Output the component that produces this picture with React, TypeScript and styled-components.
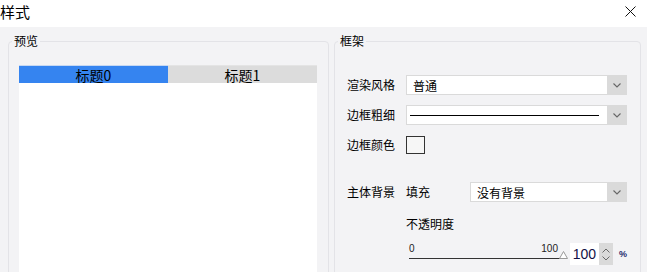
import React from "react";
import styled, { createGlobalStyle } from "styled-components";

const GlobalStyle = createGlobalStyle`
  html, body {
    margin: 0;
    padding: 0;
    background: #ffffff;
  }
  body {
    font-family: "Noto Sans CJK SC", "Noto Sans", sans-serif;
    font-size: 12px;
    color: #000;
  }
`;

const Window = styled.div`
  width: 647px;
  height: 272px;
  overflow: hidden;
  display: flex;
  flex-direction: column;
`;

const TitleBar = styled.div`
  height: 27px;
  flex: none;
  display: flex;
  align-items: center;
  justify-content: space-between;
  background: #fff;
`;

const Title = styled.div`
  font-size: 15px;
  line-height: 18px;
  margin-top: -3px;
`;

const CloseButton = styled.div`
  width: 11px;
  height: 11px;
  margin-right: 11px;
  margin-top: -5px;
  display: flex;
`;

const Body = styled.div`
  flex: 1;
  display: flex;
  gap: 5px;
  padding: 7px 6px 0 8px;
  background: #f3f3f5;
`;

const Group = styled.fieldset<{ $width: number }>`
  width: ${(p) => p.$width}px;
  box-sizing: border-box;
  height: 300px;
  margin: 0;
  padding: 0;
  border: 1px solid #e3e3e7;
  border-radius: 4px;
  min-width: 0;
`;

const Legend = styled.legend`
  margin-left: 3px;
  padding: 0 2px;
  font-size: 12px;
  line-height: 14px;
`;

const PreviewInner = styled.div`
  padding: 17px 11px 0 10px;
  height: 100%;
  display: flex;
  flex-direction: column;
`;

const TabBar = styled.div`
  display: flex;
  height: 18px;
  flex: none;
`;

const Tab = styled.div<{ $active?: boolean }>`
  flex: 1;
  display: flex;
  align-items: center;
  justify-content: center;
  background: ${(p) => (p.$active ? "#3584f0" : "#dcdcdc")};
  border-top: 1px solid ${(p) => (p.$active ? "#c6d8f2" : "#e4e4e4")};
  font-size: 14px;
  line-height: 16px;
`;

const PreviewArea = styled.div`
  flex: 1;
  background: #fff;
`;

const FrameInner = styled.div`
  padding: 27px 13px 0 12px;
  display: flex;
  flex-direction: column;
`;

const Row = styled.div<{ $top?: number }>`
  display: flex;
  align-items: center;
  height: 20px;
  margin-top: ${(p) => p.$top ?? 0}px;
`;

const Label = styled.div<{ $width?: number }>`
  width: ${(p) => p.$width ?? 59}px;
  flex: none;
  font-size: 12px;
  line-height: 14px;
  white-space: nowrap;
`;

const Combo = styled.div`
  flex: 1;
  height: 20px;
  box-sizing: border-box;
  display: flex;
  background: #fff;
  border: 1px solid #dadada;
  border-right: none;
`;

const ComboValue = styled.div`
  flex: 1;
  display: flex;
  align-items: center;
  padding-left: 6px;
  padding-right: 8px;
  font-size: 12px;
`;

const LineSample = styled.div`
  flex: 1;
  height: 1px;
  background: #000;
  margin-left: -3px;
`;

const ComboButton = styled.div`
  width: 20px;
  flex: none;
  margin: -1px 0;
  background: #dadada;
  display: flex;
  align-items: center;
  justify-content: center;
`;

const Swatch = styled.div`
  width: 19px;
  height: 18px;
  box-sizing: border-box;
  border: 1px solid #333;
  background: #f6f6f6;
`;

const Indent = styled.div`
  padding-left: 59px;
  display: flex;
  flex-direction: column;
`;

const SubTitle = styled.div`
  margin-top: 13px;
  font-size: 12px;
  line-height: 18px;
`;

const SliderRow = styled.div`
  display: flex;
  align-items: center;
  height: 22px;
  margin-top: 10px;
`;

const Slider = styled.div`
  width: 161px;
  margin-left: 3px;
  height: 22px;
  position: relative;
  display: flex;
  flex-direction: column;
`;

const SliderLabels = styled.div`
  display: flex;
  justify-content: space-between;
  padding-right: 9px;
  font-family: "Liberation Sans", sans-serif;
  font-size: 10px;
  line-height: 10px;
  margin-top: 1px;
  color: #222;
`;

const Track = styled.div`
  margin-top: 4px;
  width: 151px;
  height: 1px;
  background: #333;
`;

const Handle = styled.svg`
  position: absolute;
  left: 150px;
  top: 8px;
`;

const Spin = styled.div`
  display: flex;
  height: 22px;
  margin-left: 3px;
`;

const SpinValue = styled.div`
  width: 29px;
  background: #fff;
  display: flex;
  align-items: center;
  justify-content: center;
  font-family: "Liberation Sans", sans-serif;
  font-size: 14px;
  color: #121246;
`;

const SpinButtons = styled.div`
  width: 14px;
  background: #dadada;
  display: flex;
  flex-direction: column;
  align-items: center;
  justify-content: space-around;
  padding: 3px 0;
  box-sizing: border-box;
`;

const Percent = styled.div`
  margin-left: 6px;
  font-family: "Liberation Sans", sans-serif;
  font-weight: bold;
  font-size: 9px;
  color: #1b2a6e;
`;

const Chevron = ({ up }: { up?: boolean }) => (
  <svg width="8" height="5" viewBox="0 0 8 5">
    <polyline
      points={up ? "0.5,4.5 4,1 7.5,4.5" : "0.5,0.5 4,4 7.5,0.5"}
      fill="none"
      stroke="#6a6a6a"
      strokeWidth="1"
    />
  </svg>
);

const DropButton = () => (
  <ComboButton>
    <svg width="8" height="5" viewBox="0 0 8 5">
      <polyline points="0.5,0.5 4,4 7.5,0.5" fill="none" stroke="#666" strokeWidth="1.1" />
    </svg>
  </ComboButton>
);

export default function App() {
  return (
    <Window>
      <GlobalStyle />
      <TitleBar>
        <Title>样式</Title>
        <CloseButton>
          <svg width="11" height="11" viewBox="0 0 11 11">
            <path d="M0.5 0.5 L10.5 10.5 M10.5 0.5 L0.5 10.5" stroke="#111" strokeWidth="1" />
          </svg>
        </CloseButton>
      </TitleBar>
      <Body>
        <Group $width={321}>
          <Legend>预览</Legend>
          <PreviewInner>
            <TabBar>
              <Tab $active>标题0</Tab>
              <Tab>标题1</Tab>
            </TabBar>
            <PreviewArea />
          </PreviewInner>
        </Group>
        <Group $width={307}>
          <Legend>框架</Legend>
          <FrameInner>
            <Row>
              <Label>渲染风格</Label>
              <Combo>
                <ComboValue>普通</ComboValue>
                <DropButton />
              </Combo>
            </Row>
            <Row $top={10}>
              <Label>边框粗细</Label>
              <Combo>
                <ComboValue>
                  <LineSample />
                </ComboValue>
                <DropButton />
              </Combo>
            </Row>
            <Row $top={10}>
              <Label>边框颜色</Label>
              <Swatch />
            </Row>
            <Row $top={27}>
              <Label>主体背景</Label>
              <Label $width={64}>填充</Label>
              <Combo>
                <ComboValue>没有背景</ComboValue>
                <DropButton />
              </Combo>
            </Row>
            <Indent>
              <SubTitle>不透明度</SubTitle>
              <SliderRow>
                <Slider>
                  <SliderLabels>
                    <span>0</span>
                    <span>100</span>
                  </SliderLabels>
                  <Track />
                  <Handle width="9" height="8" viewBox="0 0 9 8">
                    <polygon points="4.5,0.5 8.5,7.5 0.5,7.5" fill="#fff" stroke="#999" strokeWidth="1" />
                  </Handle>
                </Slider>
                <Spin>
                  <SpinValue>100</SpinValue>
                  <SpinButtons>
                    <Chevron up />
                    <Chevron />
                  </SpinButtons>
                </Spin>
                <Percent>%</Percent>
              </SliderRow>
            </Indent>
          </FrameInner>
        </Group>
      </Body>
    </Window>
  );
}
